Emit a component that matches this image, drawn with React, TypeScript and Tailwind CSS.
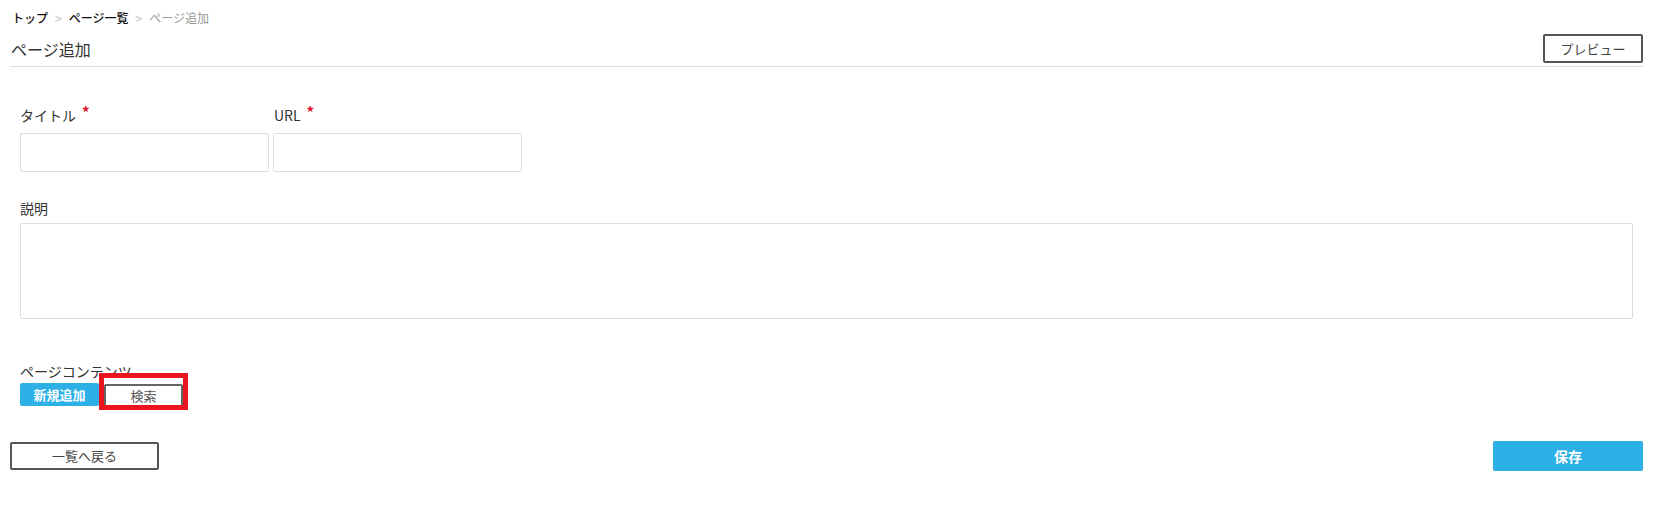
import React from "react";

const font = { fontFamily: '"Noto Sans CJK JP", "Noto Sans", sans-serif' };

export default function App() {
  return (
    <div className="min-h-[516px] bg-white pl-[10px] pr-[18px] text-[#333]" style={font}>
      {/* breadcrumb */}
      <div className="flex items-center pt-[9px] h-[27px] text-[12px] leading-[18px] pl-[2px]">
        <span className="font-medium text-[#111]">トップ</span>
        <span className="mx-[7px] text-[#bbb]">&gt;</span>
        <span className="font-medium text-[#111]">ページ一覧</span>
        <span className="mx-[7px] text-[#bbb]">&gt;</span>
        <span className="text-[#999]">ページ追加</span>
      </div>

      {/* header */}
      <div className="mt-[7px] flex items-center justify-between pb-[3px] border-b border-[#ddd]">
        <h1 className="text-[16px] leading-[24px] pl-[1px] text-[#333]">ページ追加</h1>
        <button className="w-[100px] h-[29px] border-2 border-[#555] rounded-[2px] text-[13px] text-[#444] bg-white">
          プレビュー
        </button>
      </div>

      {/* form */}
      <div className="px-[10px]">
        <div className="mt-[38px] flex gap-[4px]">
          <div className="w-[249px]">
            <div className="text-[14px] leading-[20px] h-[20px] flex">
              タイトル<span className="text-[#e0102a] ml-[6px] text-[15px] font-bold leading-[14px]">*</span>
            </div>
            <input className="mt-[8px] w-[249px] h-[39px] border border-[#ddd] rounded-[2px] outline-none" />
          </div>
          <div className="w-[249px]">
            <div className="text-[14px] leading-[20px] h-[20px] flex pl-[1px]">
              URL<span className="text-[#e0102a] ml-[6px] text-[15px] font-bold leading-[14px]">*</span>
            </div>
            <input className="mt-[8px] w-[249px] h-[39px] border border-[#ddd] rounded-[2px] outline-none" />
          </div>
        </div>

        <div className="mt-[26px] text-[14px] leading-[20px] h-[20px]">説明</div>
        <textarea className="mt-[5px] block w-full h-[96px] border border-[#ddd] rounded-[2px] outline-none resize-none" />

        <div className="mt-[42px] text-[14px] leading-[20px] h-[20px]">ページコンテンツ</div>
        <div className="flex items-center gap-[5px] mt-[1px]">
          <button className="w-[79px] h-[23px] bg-[#2cb0e6] text-white text-[13px] font-bold rounded-[2px]">
            新規追加
          </button>
          <div className="relative">
            <button className="w-[79px] h-[23px] border-2 border-[#666] rounded-[2px] text-[13px] text-[#555] bg-white">
              検索
            </button>
            <div className="absolute left-[-5px] top-[-9px] w-[89px] h-[37px] border-[5px] border-[#e8141e] pointer-events-none" />
          </div>
        </div>
      </div>

      {/* bottom */}
      <div className="mt-[34px] flex items-center justify-between">
        <button className="w-[149px] h-[28px] border-2 border-[#555] rounded-[2px] text-[13px] text-[#444] bg-white">
          一覧へ戻る
        </button>
        <button className="w-[150px] h-[30px] bg-[#2cb0e6] text-white text-[14px] font-bold rounded-[2px]">
          保存
        </button>
      </div>
    </div>
  );
}
